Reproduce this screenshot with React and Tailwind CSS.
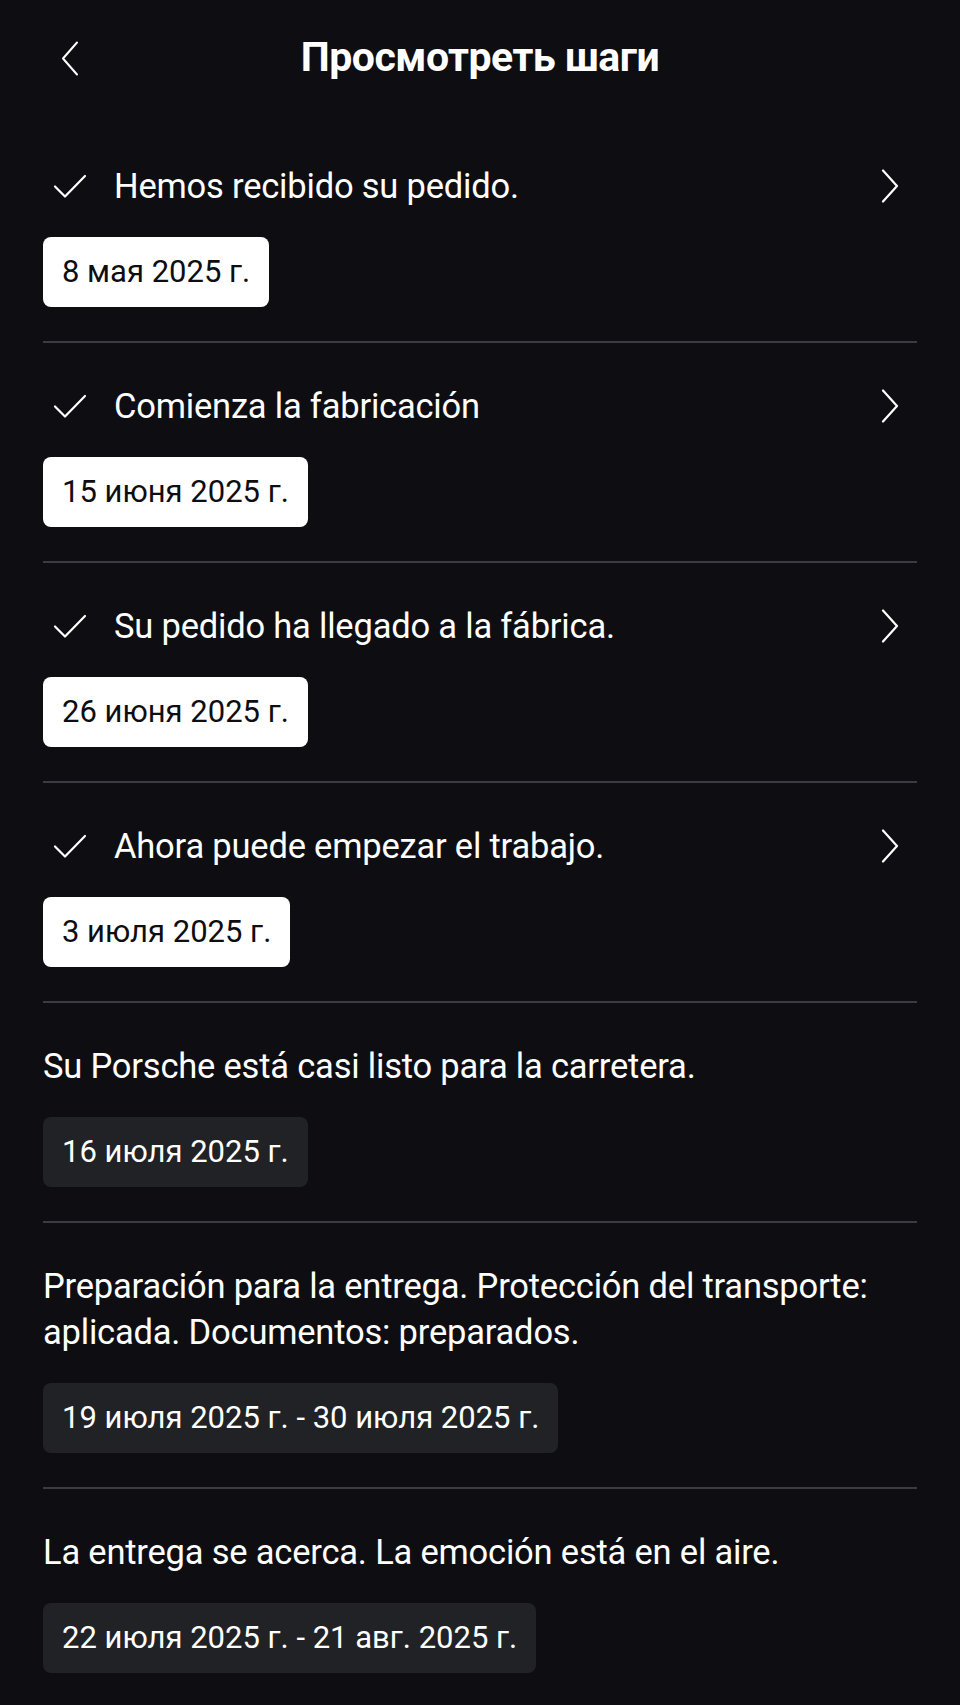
import React from 'react';

const steps = [
  { done: true, title: 'Hemos recibido su pedido.', date: '8 мая 2025 г.' },
  { done: true, title: 'Comienza la fabricación', date: '15 июня 2025 г.' },
  { done: true, title: 'Su pedido ha llegado a la fábrica.', date: '26 июня 2025 г.' },
  { done: true, title: 'Ahora puede empezar el trabajo.', date: '3 июля 2025 г.' },
  { done: false, title: 'Su Porsche está casi listo para la carretera.', date: '16 июля 2025 г.' },
  {
    done: false,
    title: 'Preparación para la entrega. Protección del transporte: aplicada. Documentos: preparados.',
    date: '19 июля 2025 г. - 30 июля 2025 г.',
  },
  { done: false, title: 'La entrega se acerca. La emoción está en el aire.', date: '22 июля 2025 г. - 21 авг. 2025 г.' },
];

const Check = () => (
  <svg width="34" height="26" viewBox="0 0 34 26" fill="none" className="shrink-0">
    <path d="M2 13.5 L12 23.5 L32 3" stroke="white" strokeWidth="2.2" strokeLinecap="round" strokeLinejoin="round" />
  </svg>
);

const ChevronRight = () => (
  <svg width="18" height="34" viewBox="0 0 18 34" fill="none" className="shrink-0">
    <path d="M2 1.5 L16 17 L2 32.5" stroke="white" strokeWidth="2.2" strokeLinecap="round" strokeLinejoin="round" />
  </svg>
);

const ChevronLeft = () => (
  <svg width="18" height="35" viewBox="0 0 18 35" fill="none">
    <path d="M16 1.5 L2 17.5 L16 33.5" stroke="white" strokeWidth="2" strokeLinecap="round" strokeLinejoin="round" />
  </svg>
);

const Step = ({ step, last }) => (
  <div className={`pt-[40px] pb-[34px] ${last ? '' : 'border-b-2 border-[#3b3c41]'}`}>
    {step.done ? (
      <div className="flex items-center">
        <div className="w-[71px] flex pl-[10px]">
          <Check />
        </div>
        <div className="flex-1 text-[34.5px] leading-[46px] tracking-[-0.2px]">{step.title}</div>
        <div className="pr-[18px]">
          <ChevronRight />
        </div>
      </div>
    ) : (
      <div className="text-[34.5px] leading-[46px] tracking-[-0.2px] pr-[20px]">{step.title}</div>
    )}
    <div className="mt-[28px] flex">
      <div
        className={`h-[70px] px-[19px] flex items-center rounded-[8px] text-[31px] ${
          step.done ? 'bg-white text-[#0e0e12]' : 'bg-[#212226] text-white'
        }`}
      >
        {step.date}
      </div>
    </div>
  </div>
);

export default function App() {
  return (
    <div className="min-h-[1705px] bg-[#0e0e12] text-white" style={{ fontFamily: 'Roboto, "Noto Sans", sans-serif' }}>
      <header className="h-[116px] relative flex items-center justify-center">
        <button className="absolute left-[61px] top-[41px]">
          <ChevronLeft />
        </button>
        <h1 className="text-[41px] font-bold tracking-[-0.5px]">Просмотреть шаги</h1>
      </header>
      <div className="px-[43px] -mt-[40px] pt-[47px]">
        {steps.map((s, i) => (
          <Step key={i} step={s} last={i === steps.length - 1} />
        ))}
      </div>
    </div>
  );
}
